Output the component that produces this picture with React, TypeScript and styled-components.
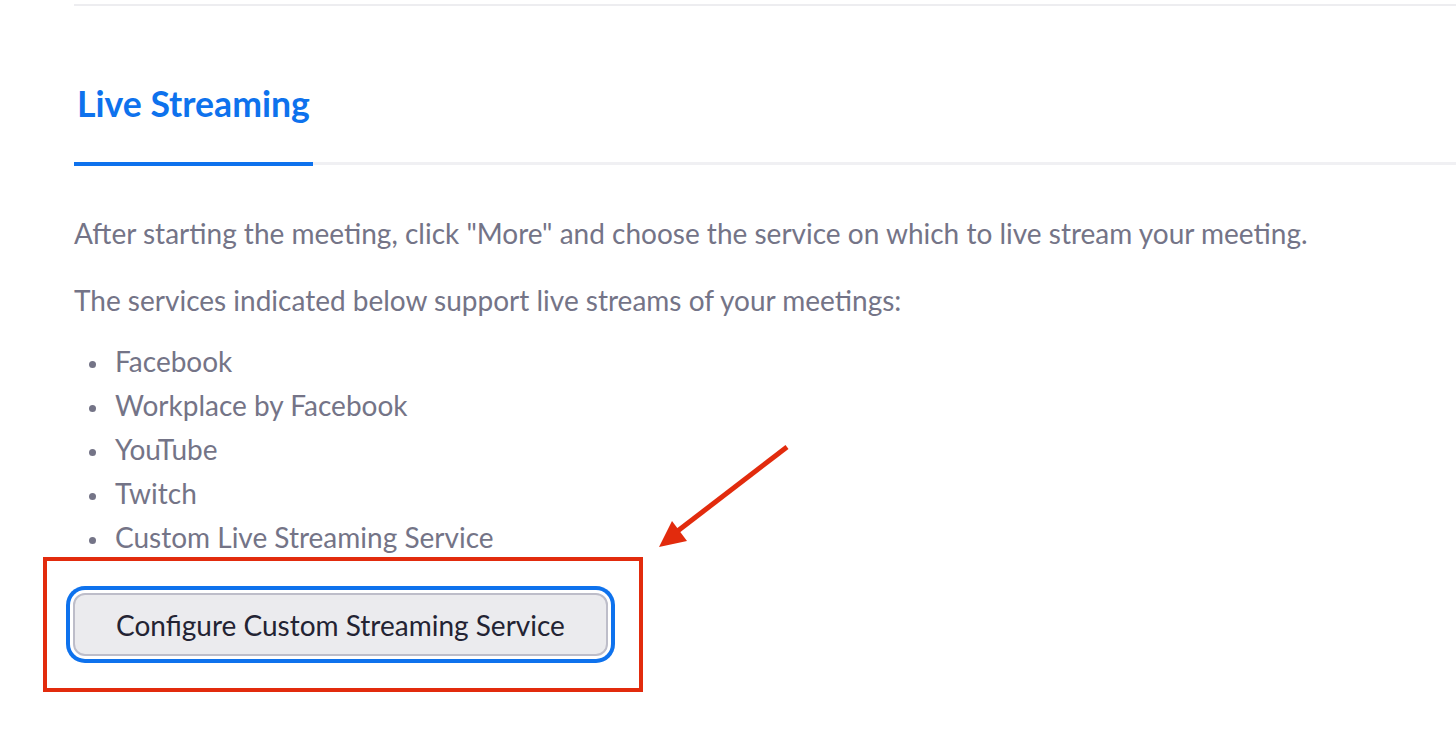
import React from "react"
import styled, { createGlobalStyle } from "styled-components"

const GlobalStyle = createGlobalStyle`
  html, body {
    margin: 0;
    padding: 0;
    background: #ffffff;
  }
  body {
    font-family: Lato, "Open Sans", Arial, sans-serif;
  }
`

const Page = styled.div`
  position: relative;
  width: 1456px;
  height: 736px;
  overflow: hidden;
  padding-left: 74px;
  box-sizing: border-box;
`

const TopRule = styled.div`
  margin-top: 4px;
  height: 2px;
  background: #ededf0;
`

const TabBar = styled.div`
  display: flex;
  padding-top: 76px;
  border-bottom: 3px solid #f0f0f3;
`

const Tab = styled.div<{ $active?: boolean }>`
  font-size: 35.6px;
  line-height: 44px;
  font-weight: 700;
  color: ${(p) => (p.$active ? "#0e72ed" : "#747487")};
  padding: 0 3px 36px 3px;
  margin-bottom: -4px;
  border-bottom: 4px solid ${(p) => (p.$active ? "#0e72ed" : "transparent")};
`

const Content = styled.div`
  padding-top: 46px;
  color: #747487;
  font-size: 28px;
  line-height: 44px;
`

const Para = styled.p<{ $gap: number }>`
  margin: 0 0 ${(p) => p.$gap}px 0;
`

const ServiceList = styled.ul`
  list-style: none;
  margin: 0 0 -2px 0;
  padding: 0;
`

const ServiceItem = styled.li`
  padding-left: 41px;
  &::before {
    content: "";
    display: inline-block;
    width: 7px;
    height: 7px;
    border-radius: 50%;
    background: #747487;
    margin-left: -26px;
    margin-right: 19px;
    vertical-align: middle;
  }
`

const Highlight = styled.div`
  display: inline-block;
  margin-left: -31px;
  padding: 32px 31px 32px 26px;
  border: 4px solid #e22b0d;
`

const ConfigureButton = styled.button`
  font-family: Lato, "Open Sans", Arial, sans-serif;
  font-size: 28px;
  line-height: 57px;
  color: #232333;
  background: #ebebee;
  border: 2px solid #bdbdc9;
  border-radius: 12px;
  padding: 2px 41px 0 41px;
  box-shadow: 0 0 0 3px #ffffff, 0 0 0 7px #0e72ed;
  cursor: pointer;
`

const Arrow = styled.svg`
  position: absolute;
  left: 650px;
  top: 440px;
`

const services = [
  "Facebook",
  "Workplace by Facebook",
  "YouTube",
  "Twitch",
  "Custom Live Streaming Service",
]

const App = () => {
  return (
    <Page>
      <GlobalStyle />
      <TopRule />
      <TabBar>
        <Tab $active>Live Streaming</Tab>
      </TabBar>
      <Content>
        <Para $gap={23}>
          After starting the meeting, click "More" and choose the service on which to live stream your meeting.
        </Para>
        <Para $gap={17}>The services indicated below support live streams of your meetings:</Para>
        <ServiceList>
          {services.map((s) => (
            <ServiceItem key={s}>{s}</ServiceItem>
          ))}
        </ServiceList>
        <Highlight>
          <ConfigureButton>Configure Custom Streaming Service</ConfigureButton>
        </Highlight>
      </Content>
      <Arrow width="150" height="120" viewBox="650 440 150 120">
        <line x1="787" y1="447" x2="675" y2="533" stroke="#e22b0d" strokeWidth="5" />
        <polygon points="659,547 672,521 687,541" fill="#e22b0d" />
      </Arrow>
    </Page>
  )
}

export default App
